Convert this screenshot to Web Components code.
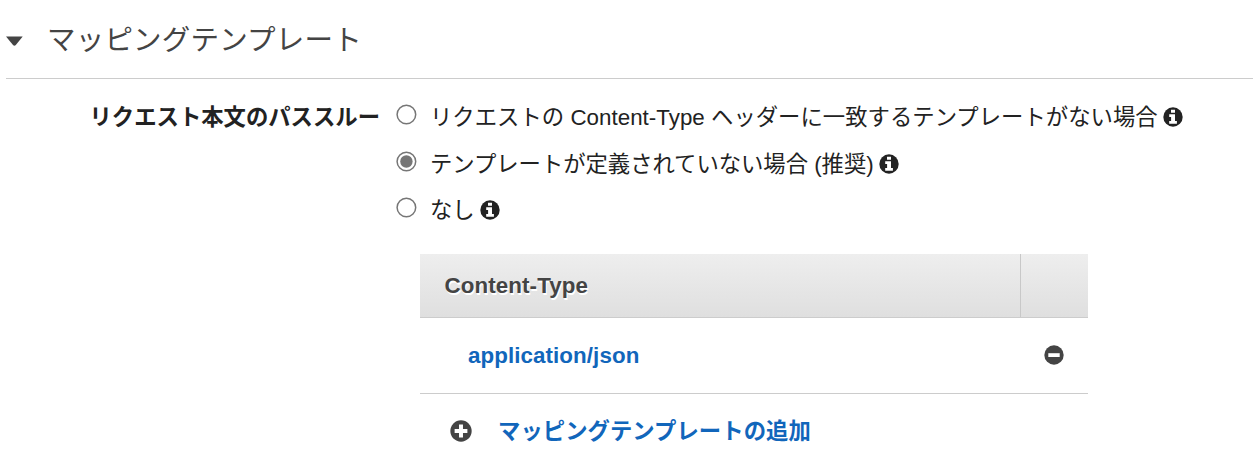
<!DOCTYPE html>
<html lang="ja">
<head>
<meta charset="utf-8">
<title>マッピングテンプレート</title>
<style>
body{margin:0;background:#fff;color:#222;font:22.35px/32px "Liberation Sans","Noto Sans CJK JP",sans-serif;overflow:hidden}
</style>
</head>
<body>
<mapping-panel></mapping-panel>
<script>
const define = (name, html) => customElements.define(name, class extends HTMLElement {
  constructor() {
    super();
    this.attachShadow({mode: 'open'}).innerHTML = html;
  }
});

define('round-icon', `
<style>
:host{display:block;flex:none;width:20px;height:20px}
svg{display:block;width:100%;height:100%}
g{display:none}
:host([kind=info]) .info,:host([kind=plus]) .plus,:host([kind=minus]) .minus{display:inline}
</style>
<svg viewBox="0 0 20 20"><circle cx="10" cy="10" r="9.7" fill="currentColor"/>
<g class="info" fill="#fff"><path d="M8 2.8h4v3H8zM6.2 7.3H12v6.8h1.9v2.6H6.2v-2.6h1.9V9.9H6.2z"/></g>
<g class="plus" fill="#fff"><path d="M8.2 4.2h3.6v4h4v3.6h-4v4H8.2v-4h-4V8.2h4z"/></g>
<g class="minus" fill="#fff"><path d="M4.3 8.2h11.4v3.8H4.3z"/></g>
</svg>`);

define('section-heading', `
<style>
:host{display:flex;box-sizing:border-box;height:79px;margin-left:6px;border-bottom:1px solid #ccc;color:#444;font-size:28.5px;letter-spacing:.2px;line-height:40px;padding-top:20px}
svg{width:18px;height:10px;margin:16px 24px 0 -1px}
span{white-space:nowrap}
</style>
<svg viewBox="0 0 18 10"><path d="M1 .5h16.7L10.8 9Q9.4 10.6 8 9z" fill="currentColor"/></svg>
<span><slot></slot></span>`);

define('radio-option', `
<style>
:host{display:flex;align-items:center;height:46.4px}
svg{flex:none;width:21px;height:21px;margin:-5px 13px 0 0}
.dot{display:none}
:host([checked]) .dot{display:inline}
span{white-space:nowrap;padding-top:2px}
:host([checked]) span{letter-spacing:-.03px}
round-icon{margin-left:5px}
</style>
<svg viewBox="0 0 21 21"><circle cx="10.4" cy="10.5" r="9.3" fill="#fff" stroke="#767676" stroke-width="1.5"/><circle class="dot" cx="10.4" cy="10.5" r="6.2" fill="#767676"/></svg>
<span><slot></slot></span><round-icon kind="info"></round-icon>`);

define('form-field', `
<style>
:host{display:flex;padding-top:15px}
.label{box-sizing:border-box;width:380px;padding-top:8px;margin-right:16px;text-align:right;font-weight:bold;white-space:nowrap}
</style>
<div class="label"><slot name="label"></slot></div><div><slot></slot></div>`);

define('type-table', `
<style>
:host{display:block;width:668px;margin:21px 0 0 420px;font-weight:bold}
.row{display:grid;grid-template-columns:600px 68px;align-items:center;box-sizing:border-box;border-bottom:1px solid #ccc}
.head{height:64px;background:linear-gradient(#eee,#dfdfdf);color:#444;text-shadow:1px 2px 0 #fff}
.head b{padding-left:24.5px;letter-spacing:.1px}
.head s{height:63px;border-left:1px solid #c8c8c8}
.item{height:76px}
.item a{padding-left:48px;letter-spacing:.08px}
a{color:#1166bb}
round-icon{color:#444}
.item round-icon{margin:-1px 0 0 24px}
.add{display:flex;align-items:center;height:74px;padding-left:30px}
.add round-icon{width:22px;height:22px}
.add a{margin-left:26px;padding-top:2px;letter-spacing:.05px;white-space:nowrap}
</style>
<div class="row head"><b>Content-Type</b><s></s></div>
<div class="row item"><a>application/json</a><round-icon kind="minus"></round-icon></div>
<div class="add"><round-icon kind="plus"></round-icon><a>マッピングテンプレートの追加</a></div>`);

define('mapping-panel', `
<style>
:host{display:block}
.first{letter-spacing:.02px}
</style>
<section-heading>マッピングテンプレート</section-heading>
<form-field>
<span slot="label">リクエスト本文のパススルー</span>
<radio-option class="first">リクエストの Content-Type ヘッダーに一致するテンプレートがない場合</radio-option>
<radio-option checked>テンプレートが定義されていない場合 (推奨)</radio-option>
<radio-option>なし</radio-option>
</form-field>
<type-table></type-table>`);
</script>
</body>
</html>
